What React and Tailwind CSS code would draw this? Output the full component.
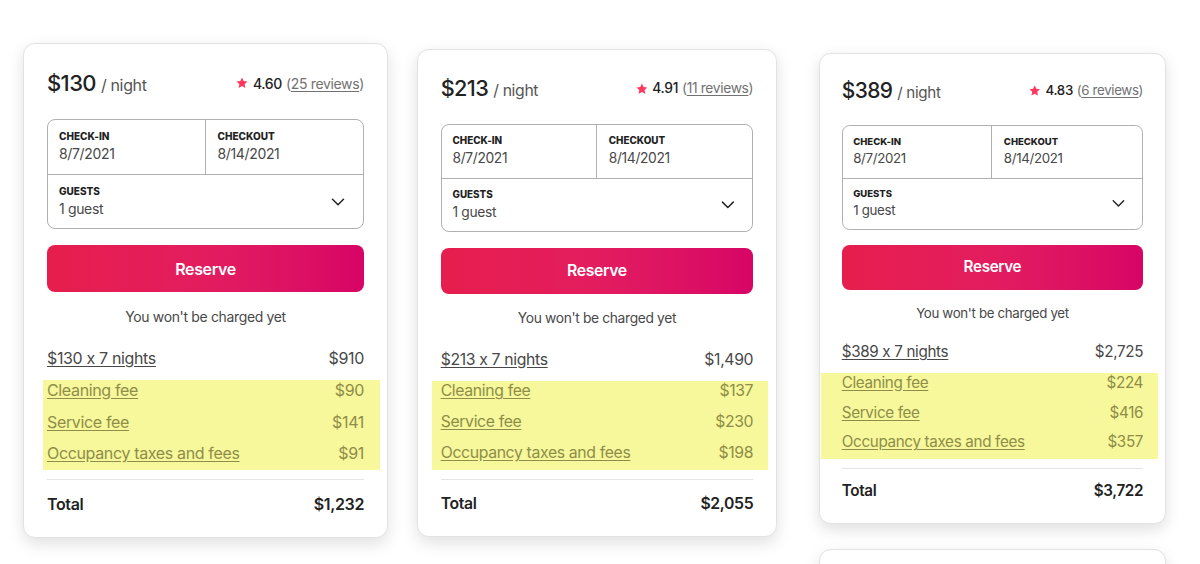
import { ChevronDown } from "lucide-react";

const listings = [
  {
    price: "$130",
    rating: "4.60",
    reviews: "25 reviews",
    nights: "$910",
    cleaning: "$90",
    service: "$141",
    taxes: "$91",
    total: "$1,232",
    zoom: "[zoom:1]",
    wrap: "ml-[23px] mt-[43px]",
    mark: "-ml-[4px] -mr-[16px] pl-[4px] pr-[16px]",
  },
  {
    price: "$213",
    rating: "4.91",
    reviews: "11 reviews",
    nights: "$1,490",
    cleaning: "$137",
    service: "$230",
    taxes: "$198",
    total: "$2,055",
    zoom: "[zoom:0.986]",
    wrap: "ml-[29px] mt-[49px]",
    mark: "-ml-[9px] -mr-[15px] pl-[9px] pr-[15px]",
  },
  {
    price: "$389",
    rating: "4.83",
    reviews: "6 reviews",
    nights: "$2,725",
    cleaning: "$224",
    service: "$416",
    taxes: "$357",
    total: "$3,722",
    zoom: "[zoom:0.951]",
    wrap: "ml-[42px] mt-[53px]",
    mark: "-ml-[22px] -mr-[16px] pl-[22px] pr-[16px]",
  },
];

function Star() {
  return (
    <svg viewBox="0 0 32 32" className="w-[12px] h-[12px] fill-[#FF385C] mr-[5px]">
      <path d="M16 1.5l4.4 9.3 10.1 1.3-7.4 7 1.9 10.1L16 24.3l-9 4.9 1.9-10.1-7.4-7 10.1-1.3z" />
    </svg>
  );
}

function Row({ label, value, marked }) {
  return (
    <div
      className={`flex justify-between items-center h-[20px] text-[16px] ${
        marked ? "text-[#8e8e48]" : "text-[#484848]"
      }`}
    >
      <span className="underline underline-offset-2">{label}</span>
      <span>{value}</span>
    </div>
  );
}

function BookingCard({ l, scale = "" }) {
  return (
    <div
      className={`w-[365px] bg-white border border-[#e2e2e2] rounded-[12px] shadow-[0_6px_16px_rgba(0,0,0,0.12)] pt-[25px] px-[23px] pb-[23px] tracking-[-0.35px] [font-feature-settings:'calt'_0] ${scale}`}
    >
      {/* price + rating */}
      <div className="flex items-center justify-between h-[28px]">
        <div className="flex items-baseline">
          <span className="text-[22px] font-medium text-[#222] tracking-[-0.6px]">{l.price}</span>
          <span className="text-[16px] text-[#555] ml-[5px]">/ night</span>
        </div>
        <div className="flex items-center text-[14px]">
          <Star />
          <span className="font-medium text-[#222]">{l.rating}</span>
          <span className="ml-[4px] text-[#717171]">
            (<span className="underline underline-offset-2">{l.reviews}</span>)
          </span>
        </div>
      </div>

      {/* dates + guests */}
      <div className="mt-[22px] h-[110px] border border-[#b0b0b0] rounded-[8px] flex flex-col">
        <div className="flex h-[55px] border-b border-[#b0b0b0]">
          <div className="w-1/2 border-r border-[#b0b0b0] pl-[11px] pt-[10px]">
            <div className="text-[10px] font-extrabold text-[#222] leading-[12px] tracking-normal">CHECK-IN</div>
            <div className="text-[14px] text-[#484848] leading-[20px] mt-[2px]">8/7/2021</div>
          </div>
          <div className="w-1/2 pl-[12px] pt-[10px]">
            <div className="text-[10px] font-extrabold text-[#222] leading-[12px] tracking-normal">CHECKOUT</div>
            <div className="text-[14px] text-[#484848] leading-[20px] mt-[2px]">8/14/2021</div>
          </div>
        </div>
        <div className="flex flex-1 items-center justify-between pl-[11px] pr-[14px]">
          <div className="pt-[1px]">
            <div className="text-[10px] font-extrabold text-[#222] leading-[12px] tracking-normal">GUESTS</div>
            <div className="text-[14px] text-[#484848] leading-[20px] mt-[2px]">1 guest</div>
          </div>
          <ChevronDown size={22} strokeWidth={1.6} className="text-[#222]" />
        </div>
      </div>

      <button className="mt-[16px] w-full h-[47px] rounded-[8px] bg-gradient-to-r from-[#E61E4D] via-[#E31C5F] to-[#D70466] text-white text-[16px] font-semibold">
        Reserve
      </button>

      <p className="mt-[15px] text-center text-[14px] leading-[20px] text-[#484848]">
        You won't be charged yet
      </p>

      <div className="mt-[21px]">
        <Row label={`${l.price} x 7 nights`} value={l.nights} />
      </div>

      <div className={`mt-[12px] bg-[#f7f79b] pb-[7px] flex flex-col gap-[11.5px] ${l.mark}`}>
        <Row label="Cleaning fee" value={l.cleaning} marked />
        <Row label="Service fee" value={l.service} marked />
        <Row label="Occupancy taxes and fees" value={l.taxes} marked />
      </div>

      <div className="mt-[9px] border-t border-[#e4e4e4]" />

      <div className="mt-[14px] flex justify-between items-center h-[20px] text-[16px] font-semibold text-[#222]">
        <span>Total</span>
        <span>{l.total}</span>
      </div>
    </div>
  );
}

export default function App() {
  return (
    <div className="w-[1200px] h-[564px] overflow-hidden bg-white flex items-start font-['Inter','Liberation_Sans',sans-serif]">
      <div className={listings[0].wrap}>
        <BookingCard l={listings[0]} scale={listings[0].zoom} />
      </div>
      <div className={listings[1].wrap}>
        <BookingCard l={listings[1]} scale={listings[1].zoom} />
      </div>
      <div className={`${listings[2].wrap} flex flex-col gap-[25px]`}>
        <BookingCard l={listings[2]} scale={listings[2].zoom} />
        {/* next panel peeking in from below */}
        <div className="w-[347px] h-[60px] bg-white border border-[#e2e2e2] rounded-[12px] shadow-[0_6px_16px_rgba(0,0,0,0.12)]" />
      </div>
    </div>
  );
}
